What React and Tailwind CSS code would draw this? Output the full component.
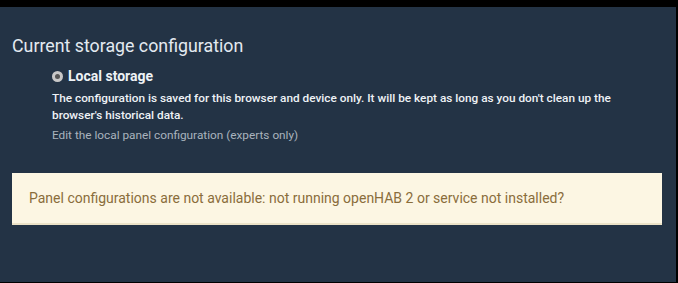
export default function App() {
  return (
    <div className="w-[678px] h-[283px] bg-black flex flex-col" style={{ fontFamily: "Roboto, 'Liberation Sans', sans-serif" }}>
      <div className="h-[7px] shrink-0" />
      <div className="flex-1 mr-[2px] mb-[1px] bg-[#233345] px-[12px] pt-[27px]">
        <h2 className="text-[17.8px] leading-[24px] text-[#e3eaf1]">Current storage configuration</h2>
        <div className="pl-[40px] pr-[10px] mt-[9px]">
          <label className="flex items-center gap-[5px]">
            <span className="w-[11px] h-[11px] rounded-full bg-[#c8c8c8] flex items-center justify-center">
              <span className="w-[5px] h-[5px] rounded-full bg-[#555]" />
            </span>
            <span className="text-[14px] leading-[18px] font-bold text-[#eef2f6]">Local storage</span>
          </label>
          <p className="mt-[5px] text-[11.8px] leading-[17px] font-medium text-[#eef2f6]">
            The configuration is saved for this browser and device only. It will be kept as long as you don't clean up the browser's historical data.
          </p>
          <p className="text-[11.8px] leading-[18px] text-[#a9b3bd] mt-[2px]">Edit the local panel configuration (experts only)</p>
        </div>
        <div className="mt-[29px] mr-[2px] bg-[#fcf6e3] border-b-[2px] border-[#ebe2c7] px-[17px] py-[15px] text-[14px] leading-[20px] text-[#8a6d3b]">
          Panel configurations are not available: not running openHAB 2 or service not installed?
        </div>
      </div>
    </div>
  );
}
